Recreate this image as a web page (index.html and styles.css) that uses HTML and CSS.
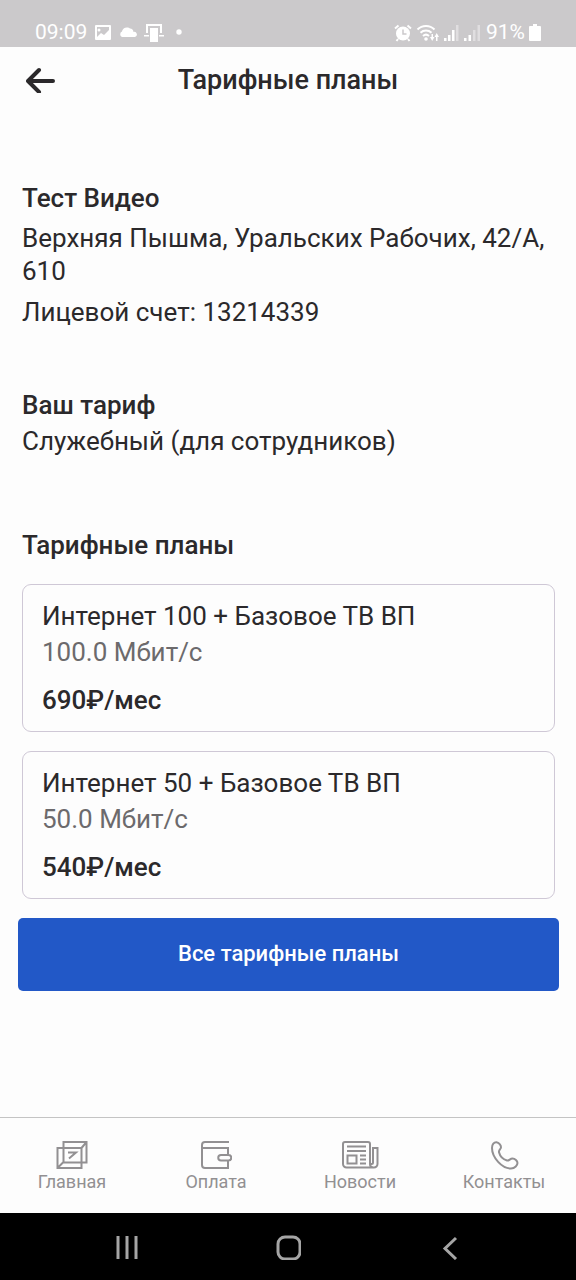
FILE: index.html
```html
<!DOCTYPE html>
<html lang="ru">
<head>
<meta charset="utf-8">
<meta name="viewport" content="width=device-width, initial-scale=1">
<title>Тарифные планы</title>
<link rel="stylesheet" href="styles.css">
</head>
<body>
<div class="screen">
  <div class="status">
    <div class="status-group">
      <span class="clock">09:09</span>
      <svg width="18" height="18" viewBox="0 0 18 18"><path fill="#fff" fill-rule="evenodd" d="M2 1h14a1 1 0 0 1 1 1v13a1 1 0 0 1-1 1H2a1 1 0 0 1-1-1V2a1 1 0 0 1 1-1zm1 2v10l4-4 3 2 5-5V3zM5 4.500a1.500 1.500 0 1 1 0 3 1.500 1.500 0 0 1 0-3z"/></svg>
      <svg width="18" height="18" viewBox="0 0 18 18"><path fill="#fff" d="M3 13a3 3 0 0 1 0-5.500A5 5 0 0 1 11 4.500 4 4 0 0 1 14.500 8 2.500 2.500 0 0 1 16 13z"/></svg>
      <svg width="20" height="20" viewBox="0 0 20 20"><path fill="#fff" d="M2 1h16v9h-2V3H4v7H2zM6 5h8v14H6zM0 12h5v1.500H0zM15 12h5v1.500h-5z"/></svg>
      <svg width="18" height="18" viewBox="0 0 18 18"><circle cx="8" cy="8" r="2.700" fill="#fff"/></svg>
    </div>
    <div class="status-group status-right">
      <svg width="18" height="18" viewBox="0 0 18 18"><path fill="none" stroke="#fff" stroke-width="2" d="M1 4.500 4.500 1.500M17 4.500l-3.500-3M4 15l-1.500 2M14 15l1.500 2"/><circle cx="9" cy="9.500" r="7" fill="#fff"/><path d="M9 5.500v4.500h3.500" fill="none" stroke="#cbc9cb" stroke-width="1.500"/></svg>
      <svg width="24" height="18" viewBox="0 0 24 18"><path fill="none" stroke="#fff" stroke-width="2" d="M1.500 5.500a12 12 0 0 1 17 0M4.500 8.800a8 8 0 0 1 11 0M7 12a4.500 4.500 0 0 1 6 0"/><circle cx="10" cy="15" r="1.800" fill="#fff"/><path fill="#fff" d="M14 13h1.500V10H17v3h1.500l-2.300 4zM18.500 13l2.200-4 2.300 4h-1.500v4H20v-4z"/></svg>
      <svg width="16" height="18" viewBox="0 0 16 18"><path fill="#fff" d="M0 14h2.500v3H0zM4 11h2.500v6H4zM8 6h2.500v11H8z"/><path fill="#fff" opacity=".4" d="M12 1h2.500v16H12z"/></svg>
      <svg width="18" height="18" viewBox="0 0 18 18"><path fill="#fff" d="M0 14h2.500v3H0zM4.500 11H7v6H4.500z"/><path fill="#fff" opacity=".4" d="M9 6h2.500v11H9zM13.500 1H16v16h-2.500z"/></svg>
      <span class="clock">91%</span>
      <svg width="12" height="18" viewBox="0 0 12 18"><path fill="#fff" d="M4 0h4v2h3a1 1 0 0 1 1 1v13a1 1 0 0 1-1 1H1a1 1 0 0 1-1-1V3a1 1 0 0 1 1-1h3z"/></svg>
    </div>
  </div>

  <header class="appbar">
    <button class="back" type="button" aria-label="Назад">
      <svg width="30" height="26" viewBox="0 0 30 26"><path fill="none" stroke="#2b292b" stroke-width="4" stroke-linecap="round" stroke-linejoin="round" d="M13 3 2 14l11 11M3 14h24"/></svg>
    </button>
    <h1 class="appbar-title">Тарифные планы</h1>
  </header>

  <main class="content">
    <section class="account">
      <h2 class="heading">Тест Видео</h2>
      <p class="address">Верхняя Пышма, Уральских Рабочих, 42/А, 610</p>
      <p class="text">Лицевой счет: 13214339</p>
    </section>
    <section class="current">
      <h2 class="heading">Ваш тариф</h2>
      <p class="text">Служебный (для сотрудников)</p>
    </section>
    <section class="plans">
      <h2 class="heading">Тарифные планы</h2>
      <article class="card">
        <h3 class="plan-name">Интернет 100 + Базовое ТВ ВП</h3>
        <p class="plan-speed">100.0 Мбит/с</p>
        <p class="plan-price">690₽/мес</p>
      </article>
      <article class="card">
        <h3 class="plan-name">Интернет 50 + Базовое ТВ ВП</h3>
        <p class="plan-speed">50.0 Мбит/с</p>
        <p class="plan-price">540₽/мес</p>
      </article>
    </section>
    <button class="all-plans" type="button">Все тарифные планы</button>
  </main>

  <nav class="tabs">
    <a class="tab" href="#home">
      <svg class="tab-icon" width="32" height="30" viewBox="0 0 32 30"><path d="M1.500 8h24v20h-24zM7.500 2h23v20.500h-23zM1.500 28l6-6M25.500 8l5-6M12 12.500h8l-7 6"/></svg>
      <span>Главная</span>
    </a>
    <a class="tab" href="#pay">
      <svg class="tab-icon" width="32" height="30" viewBox="0 0 32 30"><path d="M29 2H5a3 3 0 0 0-3 3v20a3 3 0 0 0 3 3h23v-7M2 8h26v6M21 15h7.500a2.500 2.500 0 0 1 0 5.500H21a2.500 2.500 0 0 1 0-5.500z"/></svg>
      <span>Оплата</span>
    </a>
    <a class="tab" href="#news">
      <svg class="tab-icon" width="38" height="30" viewBox="0 0 38 30"><path d="M29 22V4a2 2 0 0 0-2-2H4a2 2 0 0 0-2 2v20a3.500 3.500 0 0 0 3.500 3.500H33a3.500 3.500 0 0 0 3.500-3.500V8H32v14.500a1.500 1.500 0 0 1-3 0V22M29 22v2a3.500 3.500 0 0 0 3 3.500M6 6.500h19M6 11h19M6.500 15.500h9v8h-9zM19 15.500h6M19 19.500h6M19 23.500h6"/></svg>
      <span>Новости</span>
    </a>
    <a class="tab" href="#contacts">
      <svg class="tab-icon" width="30" height="30" viewBox="0 0 30 30"><path d="M3 8C3 4.500 5 2 7.500 2.200c2.500.3 4.500 3 4.500 5 0 2-2.500 2.800-2 5 1 4 4 7 8 8.300 2.200.6 3-2 5.500-2 2.500 0 5 2.500 5 4.500s-2.500 5.500-6.500 5.500C13 28.500 3 17.500 3 8z"/></svg>
      <span>Контакты</span>
    </a>
  </nav>

  <div class="system">
    <button class="system-key" type="button" aria-label="Недавние">
      <svg width="26" height="26" viewBox="0 0 26 26"><path d="M4 2v23M13 2v23M22 2v23"/></svg>
    </button>
    <button class="system-key" type="button" aria-label="Домой">
      <svg width="26" height="26" viewBox="0 0 26 26"><rect x="3" y="3" width="22" height="22" rx="7"/></svg>
    </button>
    <button class="system-key" type="button" aria-label="Назад">
      <svg width="26" height="26" viewBox="0 0 26 26"><path d="M20 4 9 14.500 20 25"/></svg>
    </button>
  </div>
</div>
</body>
</html>
```
FILE: styles.css
```css
* {
  box-sizing: border-box;
}

body {
  margin: 0;
  background: #fdfdfd;
  color: #2b292b;
  font-family: Roboto, "Liberation Sans", sans-serif;
  font-size: 26px;
  line-height: 32px;
}

h1, h2, h3, p {
  margin: 0;
  font-size: inherit;
  font-weight: 400;
}

button {
  border: 0;
  padding: 0;
  background: none;
  color: inherit;
  font: inherit;
}

svg {
  display: block;
  flex: none;
}

.screen {
  display: flex;
  flex-direction: column;
  min-height: 100vh;
}

.status {
  display: flex;
  justify-content: space-between;
  align-items: flex-end;
  padding: 20px 35px 2px;
  background: #cbc9cb;
  color: #fff;
  font-size: 21px;
  line-height: 25px;
}

.status-group {
  display: flex;
  align-items: center;
  gap: 7px;
}

.status-right {
  gap: 4px;
}

.appbar {
  display: grid;
  grid-template-columns: 40px 1fr 40px;
  align-items: center;
  height: 66px;
  padding: 0 26px;
}

.appbar-title {
  text-align: center;
  font-size: 27px;
  font-weight: 500;
}

.content {
  flex: 1;
  display: flex;
  flex-direction: column;
  padding: 69px 17px 24px 18px;
}

.account, .current, .plans {
  padding: 0 4px;
}

.heading {
  font-weight: 500;
}

.address {
  margin: 8px 0;
  line-height: 33px;
}

.current {
  display: flex;
  flex-direction: column;
  gap: 4px;
  margin: 61px 0 72px;
}

.card {
  margin-top: 19px;
  padding: 15px 19px;
  border: 1px solid #cfc8d6;
  border-radius: 9px;
}

.heading + .card {
  margin-top: 23px;
}

.plan-speed {
  margin: 4px 0 16px;
  color: #6c6a6c;
}

.plan-price {
  font-weight: 500;
}

.all-plans {
  margin-top: 19px;
  padding: 20px 16px 21px;
  border-radius: 5px;
  background: #2258c7;
  color: #fff;
  font-size: 22px;
  font-weight: 500;
}

.tabs {
  display: grid;
  grid-template-columns: repeat(4, 1fr);
  padding: 22px 0 19px;
  border-top: 1px solid #c4c4c4;
}

.tab {
  display: flex;
  flex-direction: column;
  align-items: center;
  color: #929092;
  font-size: 18px;
  line-height: 24px;
  text-decoration: none;
}

.tab-icon {
  fill: none;
  stroke: #929092;
  stroke-width: 2;
}

.system {
  display: grid;
  grid-template-columns: repeat(3, 28%);
  justify-content: center;
  height: 67px;
  background: #000;
}

.system-key {
  display: flex;
  align-items: center;
  justify-content: center;
}

.system-key svg {
  fill: none;
  stroke: #a5a5a5;
  stroke-width: 3;
}
```
